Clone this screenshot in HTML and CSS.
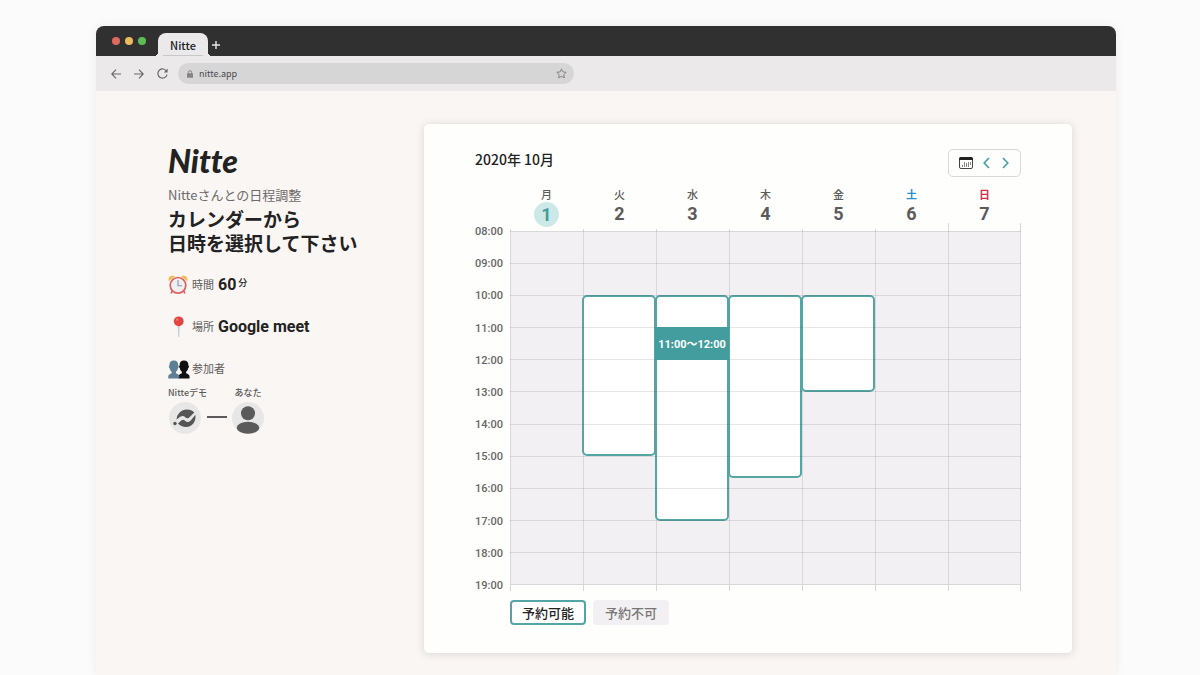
FILE: index.html
```html
<!DOCTYPE html>
<html lang="ja">
<head>
<meta charset="utf-8">
<meta name="viewport" content="width=device-width, initial-scale=1">
<title>Nitte</title>
<link rel="stylesheet" href="styles.css">
</head>
<body>
<div class="window">
  <header class="titlebar">
    <div class="lights"><i class="light red"></i><i class="light yellow"></i><i class="light green"></i></div>
    <div class="tab"><span class="tab-name">Nitte</span></div>
    <button class="new-tab" aria-label="新しいタブ"><svg width="8" height="8" viewBox="0 0 8 8"><path d="M4 0v8M0 4h8" stroke="#e8e8e8" stroke-width="1.4"/></svg></button>
  </header>
  <nav class="toolbar">
    <button class="nav-btn" aria-label="戻る"><svg width="10" height="10" viewBox="0 0 10 10"><path d="M10 5H.8M5 .7.8 5 5 9.3"/></svg></button>
    <button class="nav-btn" aria-label="進む"><svg width="10" height="10" viewBox="0 0 10 10"><path d="M0 5h9.2M5 .7 9.2 5 5 9.3"/></svg></button>
    <button class="nav-btn" aria-label="再読み込み"><svg width="11" height="11" viewBox="0 0 11 11"><path d="M9.6 3.4A4.6 4.6 0 1 0 10 6.6"/><path d="M10.6.6v3.8H6.8z" fill="#6b6a6b" stroke="none"/></svg></button>
    <label class="address">
      <svg width="6" height="8" viewBox="0 0 6 8"><path d="M1.4 4V2.3a1.6 1.6 0 0 1 3.2 0V4" fill="none" stroke="#868586"/><rect y="3.2" width="6" height="4.6" rx=".6" fill="#868586"/></svg>
      <input class="url" type="text" value="nitte.app" aria-label="アドレス">
      <svg width="11" height="11" viewBox="0 0 11 11"><path d="m5.5.9 1.4 3 3.3.4-2.4 2.3.6 3.3-2.9-1.6-2.9 1.6.6-3.3L.8 4.3l3.3-.4z" fill="none" stroke="#868586" stroke-linejoin="round"/></svg>
    </label>
  </nav>

  <main class="page">
    <section class="info">
      <div class="logo">Nitte</div>
      <p class="lead">Nitteさんとの日程調整</p>
      <h1 class="heading">カレンダーから<br>日時を選択して下さい</h1>
      <dl class="details">
        <div class="detail">
          <svg class="detail-icon" width="20" height="20" viewBox="0 0 20 20">
            <path d="M.7 6.2C-.2 2 2.7-.4 7 1.2zM19.3 6.2C20.2 2 17.3-.4 13 1.2z" fill="#f5b94e"/>
            <path d="m4.5 15.5-1.4 3M15.5 15.5l1.4 3" stroke="#d9585a" stroke-width="1.6"/>
            <circle cx="10" cy="10.3" r="7.8" fill="#f1eeef" stroke="#dc6262" stroke-width="1.7"/>
            <path d="M10 5v5.7h4" fill="none" stroke="#7e96ad" stroke-width="1.1"/>
          </svg>
          <dt>時間</dt><dd>60<small>分</small></dd>
        </div>
        <div class="detail">
          <svg class="detail-icon" width="20" height="22" viewBox="0 0 20 22">
            <path d="M9.600 9h2.200l-.5 12h-1.200z" fill="#cbd0d3"/>
            <circle cx="10.700" cy="5.300" r="4.900" fill="#e34444"/>
            <circle cx="9.200" cy="3.600" r="1.200" fill="#ef7d79"/>
          </svg>
          <dt>場所</dt><dd>Google meet</dd>
        </div>
        <div class="detail">
          <svg class="detail-icon" width="22" height="19" viewBox="0 0 22 19">
            <path d="M10.500 18.500v-2.300c0-1.500 1.700-2.200 3.400-2.900v-1.600c-1.300-.8-2-2.200-2.100-3.600-1-.5-1-2.300-.2-2.700C11.500 2 13 .5 16 .5s4.500 1.500 4.400 4.900c.8.400.8 2.200-.2 2.700-.1 1.400-.8 2.800-2.100 3.600v1.600c1.700.7 3.400 1.400 3.400 2.900v2.300z" fill="#111"/>
            <path d="M.3 18.500v-2.300c0-1.500 1.700-2.200 3.400-2.900v-1.600c-1.300-.8-2-2.200-2.100-3.600-1-.5-1-2.300-.2-2.700C1.300 2 2.800.5 5.800.5s4.500 1.500 4.400 4.900c.8.400.8 2.200-.2 2.700-.1 1.400-.8 2.800-2.100 3.600v1.600c1.700.7 3.400 1.400 3.400 2.900v2.300z" fill="#5d7f95"/>
          </svg>
          <dt>参加者</dt>
        </div>
      </dl>
      <div class="members">
        <div class="member host">
          <span>Nitteデモ</span>
          <svg width="32" height="32" viewBox="0 0 32 32"><circle cx="16" cy="16" r="16" fill="#e8e7e7"/><circle cx="6" cy="21.500" r="1.700" fill="#555"/><path d="M7.500 17.500C8 12 12 7.500 18 7.500c3 0 5.500 1 7.300 3L21 14.800c-2 2-3.300 1.800-4.800.4-2-1.900-4-1.500-8.700 2.300z" fill="#555"/><path d="M26.300 12.800C27.500 19 23.500 25 17 25c-3.200 0-6-1.200-8-3.500l3-2.700c1.500-1.300 2.700-1.300 4 0 2 1.900 4 1.500 6-.6z" fill="#555"/></svg>
        </div>
        <span class="link-line"></span>
        <div class="member">
          <span>あなた</span>
          <svg width="32" height="32" viewBox="0 0 32 32"><circle cx="16" cy="16" r="16" fill="#e8e7e7"/><circle cx="16" cy="11.300" r="7" fill="#5c5b5b"/><ellipse cx="16" cy="25.800" rx="11.300" ry="6" fill="#5c5b5b"/></svg>
        </div>
      </div>
    </section>

    <section class="card">
      <div class="card-head">
        <h2 class="month">2020年 10月</h2>
        <div class="pager">
          <button aria-label="カレンダー"><svg width="14" height="12" viewBox="0 0 14 12"><rect x=".5" y=".5" width="13" height="11" rx="1.500" fill="#fff" stroke="#444"/><path d="M0 3V2a2 2 0 0 1 2-2h10a2 2 0 0 1 2 2v1z" fill="#222"/><path d="M3.500 8v2M5.500 5v5M7.500 6v4M9.500 5v5M11.500 5v3" stroke="#888"/></svg></button>
          <button aria-label="前の週"><svg width="7" height="12" viewBox="0 0 7 12"><path d="M6 1 1.200 6 6 11" fill="none" stroke="#439c9d" stroke-width="1.600"/></svg></button>
          <button aria-label="次の週"><svg width="7" height="12" viewBox="0 0 7 12"><path d="m1 1 4.800 5L1 11" fill="none" stroke="#439c9d" stroke-width="1.600"/></svg></button>
        </div>
      </div>

      <div class="calendar">
        <div class="days">
          <div class="day today"><span>月</span><b>1</b></div>
          <div class="day"><span>火</span><b>2</b></div>
          <div class="day"><span>水</span><b>3</b></div>
          <div class="day"><span>木</span><b>4</b></div>
          <div class="day"><span>金</span><b>5</b></div>
          <div class="day saturday"><span>土</span><b>6</b></div>
          <div class="day sunday"><span>日</span><b>7</b></div>
        </div>
        <div class="hours">
          <span>08:00</span><span>09:00</span><span>10:00</span><span>11:00</span><span>12:00</span><span>13:00</span><span>14:00</span><span>15:00</span><span>16:00</span><span>17:00</span><span>18:00</span><span>19:00</span>
        </div>
        <div class="board">
          <div class="columns"><i></i><i></i><i></i><i></i><i></i><i></i><i></i></div>
          <div class="slots">
            <button class="slot tue" aria-label="火 10:00〜15:00"></button>
            <button class="slot wed" aria-label="水 10:00〜17:00"></button>
            <button class="slot thu" aria-label="木 10:00〜15:40"></button>
            <button class="slot fri" aria-label="金 10:00〜13:00"></button>
          </div>
          <div class="rows"><i></i><i></i><i></i><i></i><i></i><i></i><i></i><i></i><i></i><i></i><i></i></div>
          <div class="slots picked"><button class="booking">11:00〜12:00</button></div>
        </div>
        <div class="legend">
          <span class="key open">予約可能</span>
          <span class="key closed">予約不可</span>
        </div>
      </div>
    </section>
  </main>
</div>
</body>
</html>
```
FILE: styles.css
```css
* { box-sizing: border-box; }

body {
  margin: 0;
  background: #fbfbfb;
  color: #222;
  font-family: Roboto, "Noto Sans CJK JP", sans-serif;
}

h1, h2, p, dl, dd { margin: 0; }
svg { display: block; flex: none; }

button {
  display: grid;
  place-items: center;
  padding: 0;
  border: 0;
  background: none;
  font: inherit;
  cursor: pointer;
}

.window {
  display: flex;
  flex-direction: column;
  min-height: calc(100vh - 26px);
  margin: 26px 7% 0 8%;
  border-radius: 8px 8px 0 0;
  background: #faf6f4;
  box-shadow: 0 0 12px rgba(0, 0, 0, 0.06);
}

.titlebar {
  display: flex;
  height: 30px;
  padding-left: 16px;
  border-radius: 8px 8px 0 0;
  background: #303030;
}

.lights {
  display: flex;
  gap: 5px;
  margin-right: 8px;
  padding-top: 11px;
}

.light {
  width: 8px;
  height: 8px;
  border-radius: 50%;
}

.red { background: #e0695f; }
.yellow { background: #eabb5c; }
.green { background: #5dbd55; }

.tab {
  display: flex;
  margin-top: 7px;
}

.tab::before,
.tab::after {
  content: "";
  align-self: flex-end;
  width: 4px;
  height: 4px;
  background: radial-gradient(circle at 0 0, transparent 4px, #ebe9ea 4px);
}

.tab::after {
  background: radial-gradient(circle at 100% 0, transparent 4px, #ebe9ea 4px);
}

.tab-name {
  width: 50px;
  height: 23px;
  border-radius: 8px 8px 0 0;
  background: linear-gradient(#c9c7c8, #c9c7c8) center bottom / 40px 1px no-repeat #ebe9ea;
  font: 500 11px/24px "Noto Sans CJK JP", sans-serif;
  text-align: center;
}

.new-tab {
  margin-top: 8px;
}

.toolbar {
  display: flex;
  align-items: center;
  height: 35px;
  padding-left: 15px;
  background: #ebe9ea;
}

.nav-btn {
  width: 10px;
  margin-right: 13px;
}

.nav-btn svg {
  fill: none;
  stroke: #6b6a6b;
  stroke-width: 1.2;
}

.address {
  display: flex;
  align-items: center;
  gap: 6px;
  width: 396px;
  height: 21px;
  margin-left: -2px;
  padding: 0 7px 0 9px;
  border-radius: 11px;
  background: #d7d6d7;
}

.url {
  flex: 1;
  min-width: 0;
  padding: 0;
  border: 0;
  outline: 0;
  background: none;
  color: #4a494a;
  font: 9px/12px "Noto Sans CJK JP", sans-serif;
}

.page {
  display: flex;
  flex: 1;
  align-items: flex-start;
  padding: 33px 44px 22px 72px;
}

.info {
  flex: none;
  width: 256px;
  padding-top: 19px;
}

.logo {
  font: italic 900 32px/36px Lato, sans-serif;
  font-variant-ligatures: none;
}

.lead {
  margin-top: 6px;
  color: #6d6b6b;
  font: 13px/20px "Noto Sans CJK JP", sans-serif;
}

.heading {
  margin-top: 4px;
  font-size: 19px;
  font-weight: 700;
  line-height: 24px;
}

.details {
  display: grid;
  gap: 18px;
  margin-top: 16px;
}

.detail {
  display: flex;
  align-items: center;
  height: 24px;
}

.detail-icon {
  margin-right: 4px;
}

.detail:last-child .detail-icon { margin-right: 2px; }

dt {
  padding-top: 2px;
  color: #5c5a5a;
  font-size: 11px;
  line-height: 16px;
}

dd {
  display: flex;
  margin-left: 4px;
  font-size: 16px;
  font-weight: 700;
  line-height: 20px;
}

dd small {
  margin-left: 2px;
  font-size: 9px;
  font-weight: 500;
  line-height: 16px;
}

.members {
  display: flex;
  align-items: flex-end;
  margin-top: 6px;
}

.member {
  display: grid;
  justify-items: center;
  gap: 3px;
  color: #5c5a5a;
  font: 500 9px/12px "Noto Sans CJK JP", sans-serif;
}

.host {
  justify-items: start;
}

.host svg { margin-left: 1px; }

.link-line {
  width: 20px;
  height: 2px;
  margin: 0 5px 16px 0;
  background: #5c5a5a;
}

.card {
  flex: 1;
  min-width: 0;
  padding: 25px 51px 28px;
  border-radius: 5px;
  background: #fefefd;
  box-shadow: 0 1px 8px rgba(60, 40, 30, 0.16);
}

.card-head {
  display: flex;
  justify-content: space-between;
}

.month {
  font: 500 14px/21px "Noto Sans CJK JP", sans-serif;
}

.pager {
  display: flex;
  align-items: center;
  gap: 12px;
  height: 28px;
  padding: 0 11px 0 10px;
  border: 1px solid #dcd6d9;
  border-radius: 5px;
}

.pager button:first-child { margin-right: -2px; }

.calendar {
  display: grid;
  grid-template-columns: 35px 1fr;
  margin-top: 10px;
}

.days,
.legend {
  grid-column: 2;
}

.days {
  display: grid;
  grid-template-columns: repeat(7, 1fr);
  height: 44px;
}

.day {
  display: grid;
  grid-template-rows: 15px 25px;
  justify-items: center;
  align-content: start;
  color: #5c5b5b;
}

.day span {
  font-size: 11px;
  font-weight: 500;
  line-height: 18px;
}

.day b {
  width: 25px;
  height: 25px;
  border-radius: 50%;
  font-size: 18px;
  line-height: 24px;
  text-align: center;
}

.today b {
  background: #cde9e7;
  color: #439c9d;
  line-height: 25px;
}

.saturday span,
.sunday span {
  color: #2593c9;
  font-weight: 700;
}

.sunday span { color: #d32f4c; }

.hours {
  display: flex;
  flex-direction: column;
  justify-content: space-between;
  height: 368px;
  margin: -6px 0 -8px;
  color: #666;
  font-size: 11px;
  font-weight: 500;
  line-height: 14px;
}

.board {
  display: grid;
  height: 354px;
  background: #f2f0f2;
}

.board > div {
  display: grid;
  grid-area: 1 / 1;
}

.columns {
  grid-template-columns: repeat(7, 1fr);
  margin: -2px 0 -6px;
}

.columns i { border-left: 1px solid #d9d7d9; }

.columns i:last-child {
  margin-top: -6px;
  padding-top: 6px;
  border-right: 1px solid #d9d7d9;
}

.rows {
  grid-template-rows: repeat(11, 1fr);
  border-bottom: 1px solid #d9d7d9;
  pointer-events: none;
}

.rows i { border-top: 1px solid rgba(60, 50, 55, 0.12); }

/* One grid row stands for twenty minutes, starting at 08:00. */
.slots {
  grid-template-columns: repeat(7, 1fr);
  grid-template-rows: repeat(33, 1fr);
}

.slot {
  margin-left: -1px;
  border: 2px solid #56a5a5;
  border-radius: 5px;
  background: #fff;
}

.tue { grid-area: 7 / 2 / 22 / 3; }
.wed { grid-area: 7 / 3 / 28 / 4; }
.thu { grid-area: 7 / 4 / 24 / 5; }
.fri { grid-area: 7 / 5 / 16 / 6; }

.picked { pointer-events: none; }

.booking {
  grid-area: 10 / 3 / 13 / 4;
  margin: -1px 0 0 -1px;
  background: #439c9d;
  color: #fff;
  font-size: 11px;
  font-weight: 700;
  white-space: nowrap;
  pointer-events: auto;
}

.legend {
  display: flex;
  gap: 7px;
  margin-top: 15px;
}

.key {
  width: 76px;
  height: 25px;
  border-radius: 4px;
  font: 500 13px/25px "Noto Sans CJK JP", sans-serif;
  text-align: center;
}

.open {
  border: 2px solid #56a5a5;
  background: #fff;
  line-height: 22px;
}

.closed {
  background: #f2f0f2;
  color: #777575;
}
```
